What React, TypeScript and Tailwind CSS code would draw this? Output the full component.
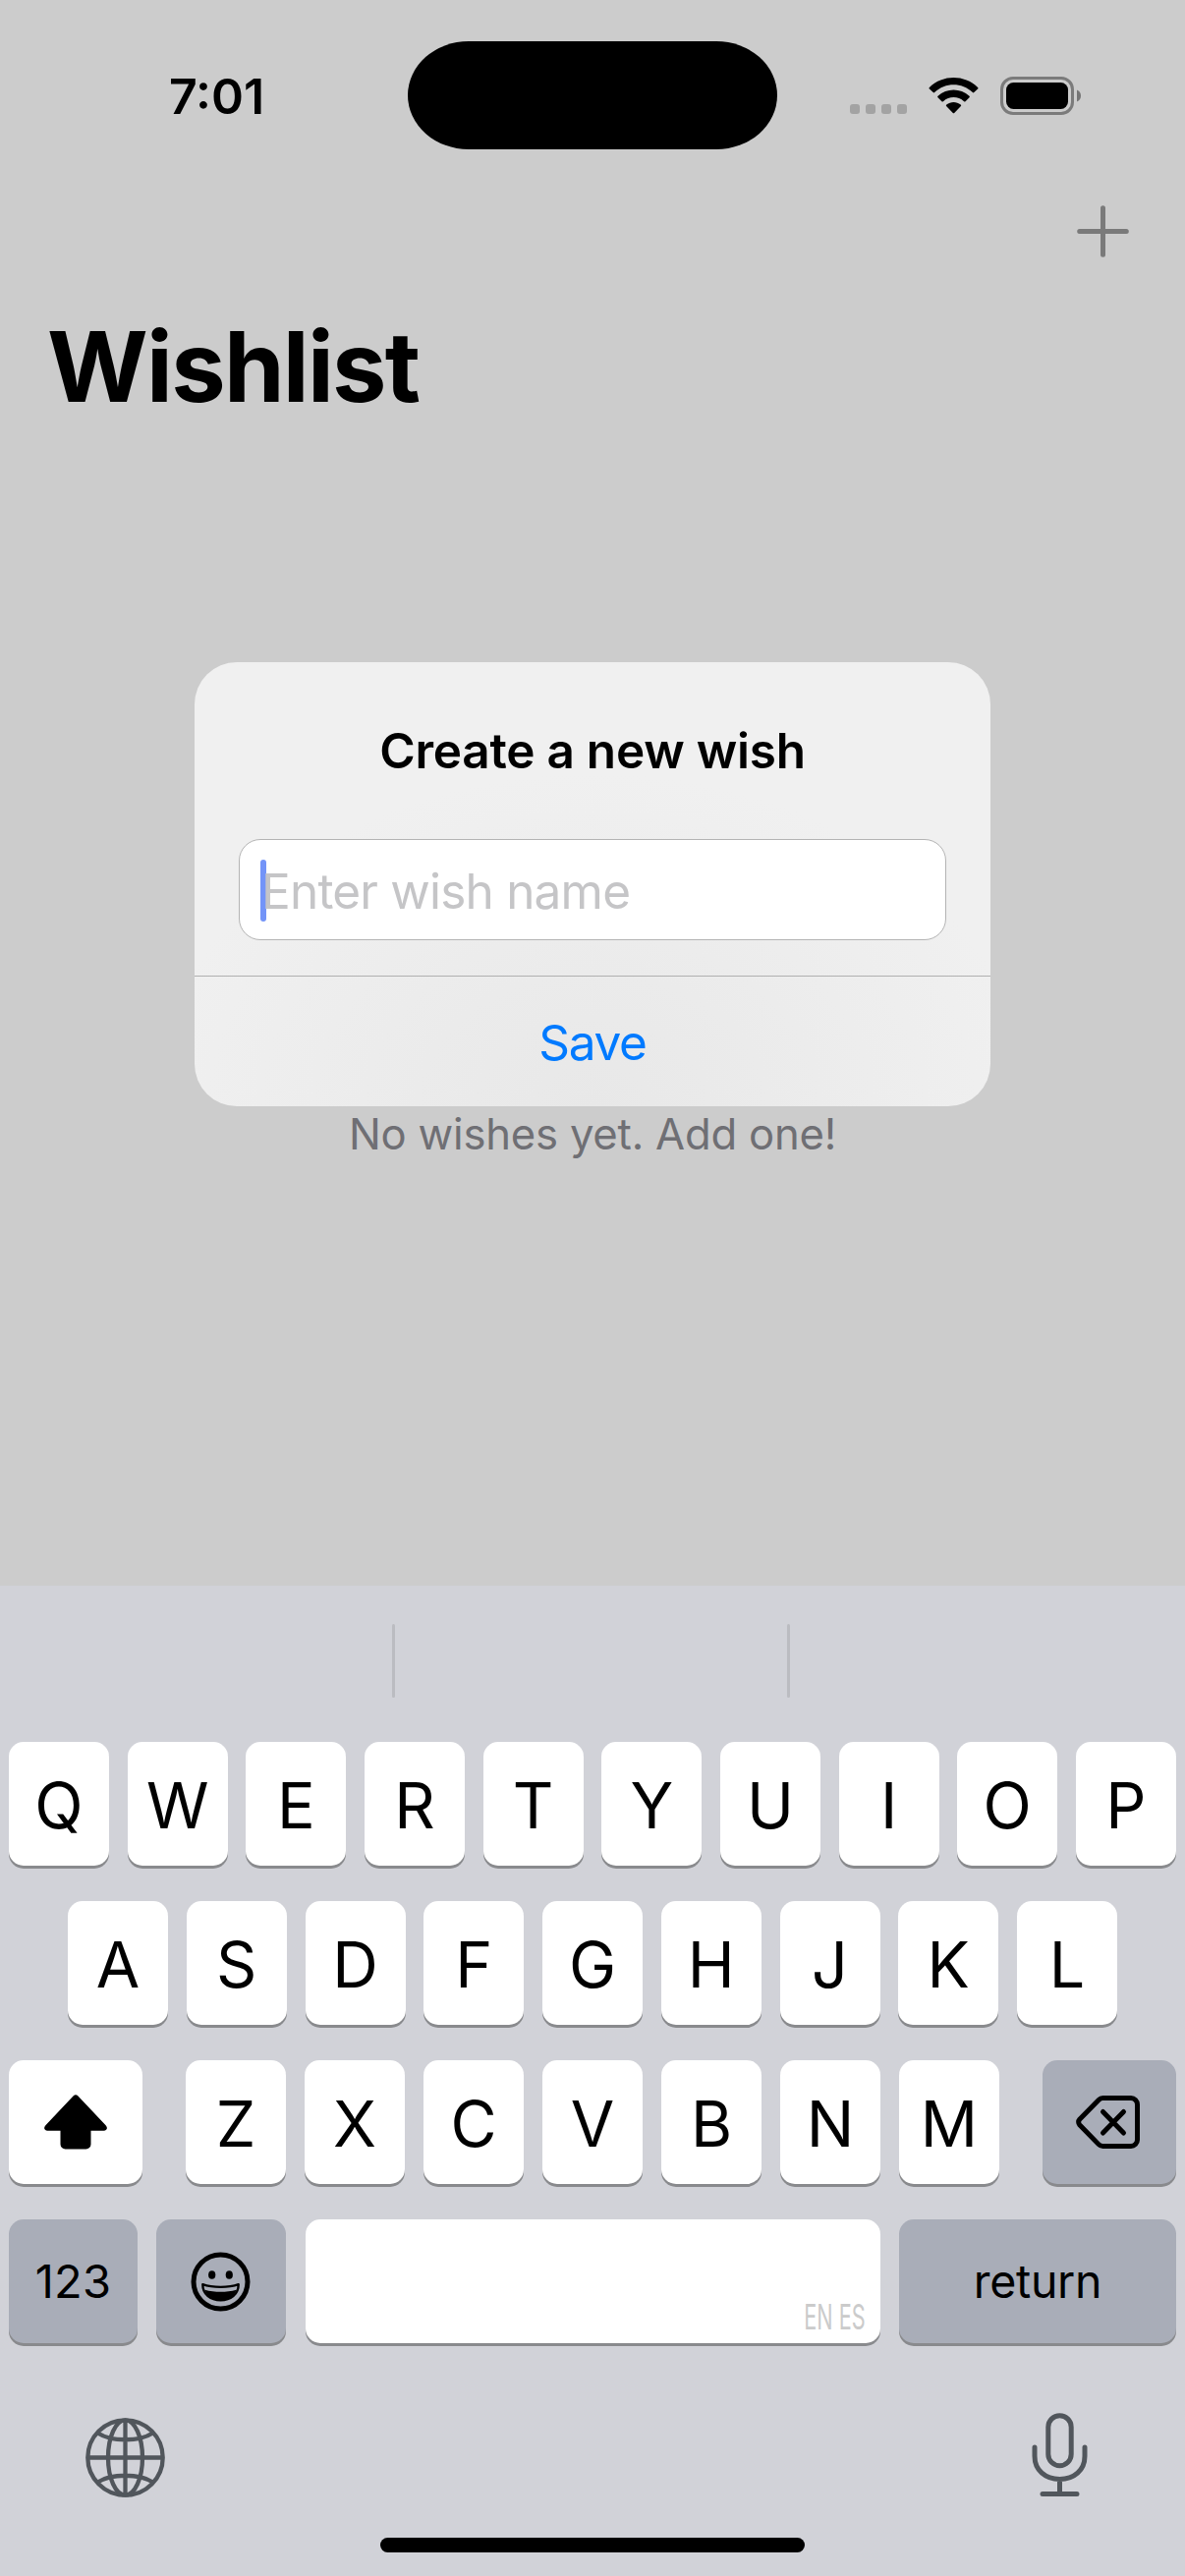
import type { ReactNode } from "react";

function StatusBar() {
  return (
    <div className="flex h-[195px] items-start pl-[172px] pr-[106px]">
      <div className="mt-[68px] w-[243px] text-[50px] font-semibold leading-[60px]">7:01</div>
      <div className="mt-[42px] h-[110px] w-[376px] rounded-[62px_/_55px] bg-black" />
      <div className="ml-auto mt-[78px] flex h-[39px] w-[235px] items-center">
        <div className="mr-[15px] flex flex-1 justify-end gap-[6px] pt-[27px]">
          {[0, 1, 2, 3].map((i) => (
            <span key={i} className="size-[10px] rounded-[3px] bg-[#a3a3a3]" />
          ))}
        </div>
        <svg className="ml-[7px] h-[39px] w-[51px] shrink-0" viewBox="0 0 51 39">
          <path d="M.9 12.4a1 1 0 0 1 0-1.5C14.600-2.300 36.400-2.300 50.100 10.900a1 1 0 0 1 0 1.500L46.300 16.100a1 1 0 0 1-1.400 0C34 5.700 17 5.700 6.100 16.100a1 1 0 0 1-1.400 0z" />
          <path d="M9.500 21.300a1 1 0 0 1 0-1.500C18.500 11.300 32.500 11.300 41.500 19.800a1 1 0 0 1 0 1.500L37.500 25.200a1 1 0 0 1-1.400 0C30 19.700 21 19.700 14.900 25.200a1 1 0 0 1-1.400 0z" />
          <path d="M18.300 30.200a1 1 0 0 1 0-1.600C22.500 25.100 28.500 25.100 32.700 28.600a1 1 0 0 1 0 1.600L26.200 37a1 1 0 0 1-1.400 0z" />
        </svg>
        <svg className="ml-[22px] h-[39px] w-[83px] shrink-0" viewBox="0 0 83 39">
          <rect x="1.500" y="1.500" width="72" height="36" rx="11.500" fill="none" stroke="#7b7b7b" strokeWidth="3" />
          <rect x="6" y="6" width="63" height="27" rx="7.500" />
          <path d="M78 13.500c2.500 1 4 3.300 4 6s-1.500 5-4 6z" fill="#757575" />
        </svg>
      </div>
    </div>
  );
}

function Key({ children, className = "" }: { children?: ReactNode; className?: string }) {
  return (
    <div className={`flex h-[126px] shrink-0 items-center justify-center rounded-[15px] shadow-[0_3px_0_#898a8d] ${className}`}>
      {children}
    </div>
  );
}

function Letter({ children }: { children: string }) {
  return <Key className="w-[102px] bg-white pt-[4px] text-[64.500px]">{children}</Key>;
}

function Keyboard() {
  return (
    <div className="flex h-[1008px] flex-col bg-[#d1d2d8]">
      <div className="flex h-[159px] justify-center gap-[399px] pr-[3px] pt-[39px]">
        <span className="h-[75px] w-[3px] rounded-full bg-[#bbbcc1]" />
        <span className="h-[75px] w-[3px] rounded-full bg-[#bbbcc1]" />
      </div>
      <div className="flex flex-col gap-[36px]">
        <div className="flex justify-between px-[9px]">
          {"QWERTYUIOP".split("").map((c) => <Letter key={c}>{c}</Letter>)}
        </div>
        <div className="flex justify-between px-[69px]">
          {"ASDFGHJKL".split("").map((c) => <Letter key={c}>{c}</Letter>)}
        </div>
        <div className="flex justify-between px-[9px]">
          <Key className="w-[136px] bg-white">
            <svg className="h-[56px] w-[64px]" viewBox="0 0 64 56">
              <path d="M29.500 1.600a3.500 3.500 0 0 1 5 0L62.600 31.300c2.400 2.600 1.300 5.400-1.900 5.400H47.500v13.800a5 5 0 0 1-5 5h-21a5 5 0 0 1-5-5V36.700H3.300C.1 36.700-1 33.900 1.400 31.300z" />
            </svg>
          </Key>
          <div className="flex w-[828px] justify-between">
            {"ZXCVBNM".split("").map((c) => <Letter key={c}>{c}</Letter>)}
          </div>
          <Key className="w-[136px] bg-[#a9adb8]">
            <svg className="mr-[3px] h-[60px] w-[65px]" viewBox="0 0 65 60" fill="none" stroke="black" strokeWidth="5" strokeLinecap="round" strokeLinejoin="round">
              <path d="M27.500 5.500H56a6.500 6.500 0 0 1 6.500 6.500v36a6.500 6.500 0 0 1-6.500 6.500H27.500a6 6 0 0 1-4.400-1.900L3.700 32.700a4 4 0 0 1 0-5.400L23.100 7.400a6 6 0 0 1 4.400-1.900z" />
              <path d="M27.500 19.500 48.500 41M48.500 19.500 27.500 41" />
            </svg>
          </Key>
        </div>
        <div className="flex px-[9px]">
          <Key className="w-[131px] bg-[#a9adb8] text-[47px] tracking-[0.300px]">123</Key>
          <Key className="ml-[19px] w-[132px] bg-[#a9adb8]">
            <svg className="mr-[2px] size-[61px]" viewBox="0 0 61 61">
              <circle cx="30.500" cy="30.500" r="27.500" fill="none" stroke="black" strokeWidth="5" />
              <ellipse cx="21.700" cy="23.500" rx="3.600" ry="4.300" />
              <ellipse cx="39.300" cy="23.500" rx="3.600" ry="4.300" />
              <path d="M12.300 33.200c10 3.600 26.400 3.600 36.400 0C48.700 43.500 40.500 49.300 30.500 49.300S12.300 43.500 12.300 33.200z" fill="none" stroke="black" strokeWidth="2.400" strokeLinejoin="round" />
              <path d="M14.500 38.700c10 2.800 22 2.800 32 0C44.500 45.800 38.500 49.500 30.500 49.500S16.500 45.800 14.500 38.700z" />
            </svg>
          </Key>
          <Key className="ml-[20px] w-[585px] bg-white">
            <span className="mb-[10px] ml-auto mr-[15px] origin-right scale-x-[0.62] self-end whitespace-nowrap text-[35px] leading-[34px] text-[#cbcbcb]">
              EN ES
            </span>
          </Key>
          <Key className="ml-[19px] w-[282px] bg-[#a9adb8] pt-[2px] text-[46.500px] tracking-[-0.300px]">return</Key>
        </div>
      </div>
      <div className="flex justify-between pl-[87px] pr-[99px] pt-[69px]">
        <svg className="mt-[7px] size-[81px]" viewBox="0 0 81 81" fill="none" stroke="#51565c" strokeWidth="4.300">
          <circle cx="40.500" cy="40.500" r="38.200" />
          <ellipse cx="40.500" cy="40.500" rx="17.500" ry="38.200" />
          <path d="M40.500 2.500v76M2.500 40.500h76M12.500 15.500c14 9 42 9 56 0M12.500 65.500c14-9 42-9 56 0" />
        </svg>
        <svg className="mt-[2px] h-[86px] w-[57px]" viewBox="0 0 57 86" fill="none" stroke="#51565c" strokeWidth="5" strokeLinecap="round">
          <rect x="16.800" y="2.700" width="23.400" height="51" rx="11.700" />
          <path d="M3 35v9c0 14.500 11 23.500 25.500 23.500S54 58.500 54 44v-9M28.500 68v14M11 82.500h35" />
        </svg>
      </div>
      <div className="mx-auto mt-auto mb-[24px] h-[15px] w-[432px] rounded-full bg-black" />
    </div>
  );
}

function WishDialog() {
  return (
    <div className="absolute left-[198px] top-[674px] flex h-[452px] w-[810px] flex-col rounded-[43px] bg-[#f0f0f0] bg-[radial-gradient(ellipse_55%_75%_at_50%_100%,#e8e8e8_0%,#ebebeb_40%,#f0f0f0_100%)]">
      <h2 className="mt-[60px] text-center text-[49.500px] font-semibold leading-[60px] tracking-[-0.250px]">Create a new wish</h2>
      <div className="mx-[45px] mt-[60px] flex h-[103px] items-center rounded-[22px] border border-[#b4b4b4] bg-white pl-[21px]">
        <span className="mt-[2px] h-[63px] w-[6px] rounded-[3px] bg-[#7394f8]" />
        <span className="-ml-[5px] mt-[3px] text-[49.500px] leading-[60px] tracking-[-0.800px] text-[#c5c5c7]">Enter wish name</span>
      </div>
      <div className="mt-[36px] flex flex-1 items-center justify-center border-t border-[#b0b0b0] pt-[2px] text-[49.500px] tracking-[-1.300px] text-[#007aff]">
        Save
      </div>
    </div>
  );
}

export default function App() {
  return (
    <div className="h-[2622px] w-[1206px] overflow-hidden bg-[#cccccc] font-['Inter',sans-serif] text-black">
      <div className="relative h-[1614px]">
        <StatusBar />
        <div className="flex h-[120px] justify-end pr-[57px] pt-[14px]">
          <svg className="size-[53px]" viewBox="0 0 53 53" stroke="#7a7a7a" strokeWidth="5" strokeLinecap="round">
            <path d="M26.500 2.700v47.600M2.700 26.500h47.600" />
          </svg>
        </div>
        <h1 className="ml-[48px] mt-[-2px] text-[99px] font-bold leading-[120px] tracking-[-1.700px]">Wishlist</h1>
        <p className="mt-[692px] text-center text-[43.600px] leading-[60px] tracking-[-0.200px] text-[#6f6f74]">No wishes yet. Add one!</p>
        <WishDialog />
      </div>
      <Keyboard />
    </div>
  );
}
